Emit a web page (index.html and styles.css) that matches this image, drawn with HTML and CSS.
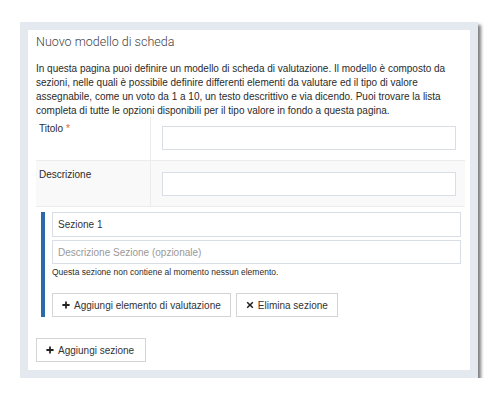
FILE: index.html
```html
<!DOCTYPE html>
<html lang="it">
<head>
  <meta charset="UTF-8">
  <meta name="viewport" content="width=device-width, initial-scale=1.0">
  <title>Nuovo modello di scheda</title>
  <link rel="stylesheet" href="styles.css">
</head>
<body>

<div class="frame">
  <div class="panel">
    <h1 class="panel-title">Nuovo modello di scheda</h1>
    <p class="intro">In questa pagina puoi definire un modello di scheda di valutazione. Il modello è composto da sezioni, nelle quali è possibile definire differenti elementi da valutare ed il tipo di valore assegnabile, come un voto da 1 a 10, un testo descrittivo e via dicendo. Puoi trovare la lista completa di tutte le opzioni disponibili per il tipo valore in fondo a questa pagina.</p>

    <div class="form-table">
      <div class="form-row">
        <label class="form-label" for="titolo">Titolo <span class="required">*</span></label>
        <div class="form-field"><input type="text" id="titolo"></div>
      </div>
      <div class="form-row alt">
        <label class="form-label" for="descrizione">Descrizione</label>
        <div class="form-field"><input type="text" id="descrizione"></div>
      </div>
    </div>

    <div class="section">
      <input type="text" class="section-name" value="Sezione 1">
      <input type="text" class="section-desc" placeholder="Descrizione Sezione (opzionale)">
      <p class="section-empty">Questa sezione non contiene al momento nessun elemento.</p>
      <div class="section-actions">
        <button class="btn">
          <svg class="icon" viewBox="0 0 10 10"><path d="M3.9 0.5h2.2v3.4h3.4v2.2H6.1v3.4H3.9V6.1H0.5V3.9h3.4z"/></svg>
          Aggiungi elemento di valutazione
        </button>
        <button class="btn">
          <svg class="icon" viewBox="0 0 10 10"><path d="M2.2 0.8L5 3.6 7.8 0.8 9.2 2.2 6.4 5 9.2 7.8 7.8 9.2 5 6.4 2.2 9.2 0.8 7.8 3.6 5 0.8 2.2z"/></svg>
          Elimina sezione
        </button>
      </div>
    </div>

    <button class="btn add-section">
      <svg class="icon" viewBox="0 0 10 10"><path d="M3.9 0.5h2.2v3.4h3.4v2.2H6.1v3.4H3.9V6.1H0.5V3.9h3.4z"/></svg>
      Aggiungi sezione
    </button>
  </div>
</div>

</body>
</html>
```

FILE: styles.css
```css
body {
  margin: 0;
  font-family: "Liberation Sans", Arial, sans-serif;
  font-size: 10px;
  color: #2b2b2b;
  background-color: #fff;
}
.frame {
  width: 442px;
  margin: 22px 0 0 20px;
  padding: 8px;
  background-color: #e4e9ef;
  box-shadow: 3px 3px 3px rgba(0, 0, 0, 0.5);
}
.panel {
  background-color: #fff;
  padding: 4px 8px 8px 8px;
}
.panel-title {
  margin: 0;
  font-family: Roboto, "Liberation Sans", sans-serif;
  font-weight: 300;
  font-size: 12.5px;
  line-height: 16px;
  color: #444;
}
.intro {
  margin: 12px 0 0 0;
  line-height: 14px;
}
.form-table {
  margin-top: -1px;
  margin-right: -3px;
}
.form-row {
  display: flex;
  border-bottom: 1px solid #ececec;
}
.form-row.alt {
  background-color: #f9f9f9;
}
.form-label {
  width: 111px;
  padding: 6px 0 0 3px;
  border-right: 1px solid #ececec;
  line-height: 12px;
}
.form-row.alt .form-label {
  padding-top: 8px;
}
.required {
  color: #e8612c;
}
.form-field {
  flex: 1;
  padding: 9px 9px 10px 11px;
}
.form-row.alt .form-field {
  padding-top: 11px;
  padding-bottom: 10px;
}
input[type="text"] {
  display: block;
  width: 100%;
  height: 24px;
  box-sizing: border-box;
  padding: 0 5px;
  border: 1px solid #d9dee6;
  border-radius: 0;
  font-family: "Liberation Sans", Arial, sans-serif;
  font-size: 10px;
  color: #333;
  background-color: #fff;
}
input::placeholder {
  color: #999;
}
.section {
  margin: 5px 1px 0 5px;
  padding-left: 7px;
  border-left: 4px solid #2a6aaa;
}
.section-name {
  height: 25px !important;
}
.section-desc {
  margin-top: 3px;
}
.section-empty {
  margin: 0;
  padding-top: 1px;
  font-size: 8.5px;
  line-height: 14px;
}
.section-actions {
  display: flex;
  gap: 5px;
  margin-top: 14px;
}
.btn {
  display: flex;
  align-items: center;
  gap: 4px;
  height: 24px;
  padding: 0 9px;
  border: 1px solid #d4d4d4;
  border-radius: 0;
  background-color: #fff;
  font-family: "Liberation Sans", Arial, sans-serif;
  font-size: 10px;
  color: #333;
  cursor: pointer;
}
.icon {
  width: 8px;
  height: 8px;
  fill: #222;
}
.add-section {
  margin-top: 21px;
  padding-right: 11px;
}
```
